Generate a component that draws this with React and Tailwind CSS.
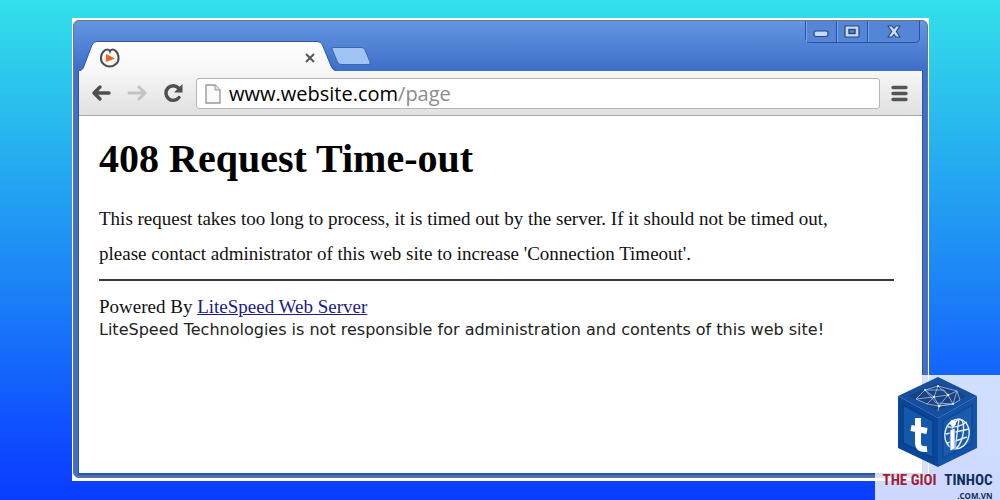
import React, { useState } from 'react';

const WindowButton = ({ label, className, children }) => (
  <button
    type="button"
    aria-label={label}
    className={`flex h-full items-center justify-center shadow-[inset_1px_0_0_#79a6ea] ${className}`}
  >
    {children}
  </button>
);

const WindowControls = () => (
  <div className="mr-0.5 flex h-[22px] shrink-0 rounded-b-[5px] border-x border-b border-[#2a519f] bg-[#5485d6]">
    <WindowButton label="Minimize" className="w-[31px] border-r border-[#2a519f]">
      <svg width="16" height="8" viewBox="0 0 16 8" className="mt-1">
        <rect x="1" y="1" width="14" height="5.500" rx="2" fill="#c9daf6" stroke="#28457f" strokeWidth="1.2" />
      </svg>
    </WindowButton>
    <WindowButton label="Maximize" className="w-[31px] border-r border-[#2a519f]">
      <svg width="16" height="13" viewBox="0 0 16 13">
        <rect x="1" y="1" width="14" height="11" rx="1" fill="#c9daf6" stroke="#28457f" strokeWidth="1.2" />
        <rect x="5" y="4.5" width="6" height="4" fill="#5485d6" stroke="#28457f" strokeWidth="1.4" />
      </svg>
    </WindowButton>
    <WindowButton label="Close" className="w-[51px]">
      <svg width="14" height="13" viewBox="0 0 14 13">
        <path d="M1 1h4l2 2.5L9 1h4L9.3 6.5 13 12H9L7 9.5 5 12H1l3.7-5.5z" fill="#c9daf6" stroke="#28457f" strokeWidth="1.1" strokeLinejoin="round" />
      </svg>
    </WindowButton>
  </div>
);

const TabStrip = () => (
  <div className="flex h-[50px] items-start justify-between">
    <div className="flex items-start pt-5">
      <div className="relative h-[30px] w-[258px]">
        <svg width="258" height="30" viewBox="0 0 258 30" className="absolute inset-0">
          <defs>
            <linearGradient id="tab" x1="0" y1="0" x2="0" y2="1">
              <stop offset="0" stopColor="#ffffff" />
              <stop offset="1" stopColor="#f7f7f7" />
            </linearGradient>
          </defs>
          <path d="M0 30C3 29 4 28 5 25L13 4Q14.500 .5 18 .5H238Q242 .5 243.500 4L252 25Q254 30 258 30Z" fill="url(#tab)" />
          <path d="M0 30C3 29 4 28 5 25L13 4Q14.500 .5 18 .5H238Q242 .5 243.500 4L252 25Q254 30 258 30" fill="none" stroke="#31569f" />
        </svg>
        <div className="relative flex h-full items-center justify-between pt-1 pr-[18px] pl-5">
          <svg width="22" height="22" viewBox="0 0 22 22">
            <path d="M11 4.300C10 1.800 7 2 5.300 3.800 .8 7.500 1 14 4.500 17 8 20.300 13.500 20.300 17 17 20.500 14 20.500 7.500 16.500 3.800 14.800 2 12 1.800 11 4.300Z" fill="#f7f7f7" stroke="#4d4d4d" strokeWidth="2" />
            <path d="M7 7V15L16 11.500Z" fill="#f4601d" />
          </svg>
          <button type="button" aria-label="Close tab" className="p-1">
            <svg width="10" height="10" viewBox="0 0 10 10">
              <path d="M1 1l8 8M9 1L1 9" stroke="#555" strokeWidth="2" />
            </svg>
          </button>
        </div>
      </div>
      <button type="button" aria-label="New tab" className="-ml-2 pt-1">
        <svg width="42" height="20" viewBox="0 0 42 20">
          <path d="M4 2.500H33Q35 2.500 36 5L41 17Q41.500 19.500 40 19.500H12Q9.500 19.500 8.500 17L3 4Q2.500 2.500 4 2.500Z" fill="#9fc4f3" stroke="#3c66b5" />
        </svg>
      </button>
    </div>
    <WindowControls />
  </div>
);

const Toolbar = () => {
  const [host, setHost] = useState('www.website.com');

  return (
    <div className="flex h-[45px] items-center border-b border-[#a9a9a9] bg-linear-to-b from-[#f7f7f7] to-[#e0e0e0] pr-3.5 pl-3">
      <button type="button" aria-label="Back">
        <svg width="20" height="18" viewBox="0 0 20 18">
          <path d="M9 3 3 9 9 15M3 9H18" fill="none" stroke="#4f4f4f" strokeWidth="3.400" strokeLinecap="round" strokeLinejoin="round" />
        </svg>
      </button>
      <button type="button" aria-label="Forward" className="ml-4">
        <svg width="20" height="18" viewBox="0 0 20 18">
          <path d="M12 3 18 9 12 15M18 9H2" fill="none" stroke="#c3c3c3" strokeWidth="3" strokeLinecap="round" strokeLinejoin="round" />
        </svg>
      </button>
      <button type="button" aria-label="Reload" className="ml-4">
        <svg width="20" height="20" viewBox="0 0 20 20">
          <path d="M15.500 5A7.300 7.300 0 1 0 16 14.500" fill="none" stroke="#4f4f4f" strokeWidth="3.400" strokeLinecap="round" />
          <path d="M19.500 1V9.500H11Z" fill="#4f4f4f" />
        </svg>
      </button>
      <label className="ml-[13px] flex h-[31px] min-w-0 flex-1 items-center rounded-[3px] border border-[#b5b5b5] bg-white pt-px pl-2 font-['Open_Sans',sans-serif] text-[20px] leading-[28px]">
        <svg width="16" height="20" viewBox="0 0 16 20" className="mr-2 shrink-0">
          <path d="M1 1H10L15 6V19H1Z" fill="#fafafa" stroke="#9a9a9a" strokeWidth="1.400" />
          <path d="M10 1V6H15" fill="#e4e4e4" stroke="#9a9a9a" />
        </svg>
        <input
          type="text"
          aria-label="Address"
          value={host}
          onChange={(e) => setHost(e.target.value)}
          className="field-sizing-content min-w-0 bg-transparent text-black outline-none"
        />
        <span className="text-[#8c8c8c]">/page</span>
      </label>
      <button type="button" aria-label="Menu" className="ml-[11px]">
        <svg width="17" height="17" viewBox="0 0 17 17">
          <path d="M2 2.500H15M2 8.500H15M2 14.500H15" stroke="#555" strokeWidth="3.400" strokeLinecap="round" />
        </svg>
      </button>
    </div>
  );
};

const ErrorPage = () => (
  <main className="flex-1 bg-white pt-[21px] pr-7 pl-5 font-['Liberation_Serif',serif] text-[19px] text-[#111]">
    <h1 className="text-[40px] leading-[44px] font-bold text-black">408 Request Time-out</h1>
    <p className="mt-5 leading-[35px]">
      This request takes too long to process, it is timed out by the server. If it should not be timed out,
      <br />
      please contact administrator of this web site to increase 'Connection Timeout'.
    </p>
    <hr className="mt-2 border-t-2 border-[#3a3a3a]" />
    <p className="mt-3 leading-[28px]">
      Powered By <a href="#litespeed" className="text-[#1a1a8c] underline">LiteSpeed Web Server</a>
    </p>
    <p className="font-['DejaVu_Sans',sans-serif] text-[16px] leading-[18px] text-[#222]">
      LiteSpeed Technologies is not responsible for administration and contents of this web site!
    </p>
  </main>
);

const Watermark = () => (
  <div className="absolute right-0 bottom-0 flex h-[125px] w-[125px] flex-col items-center bg-white/80">
    <svg width="84" height="92" viewBox="0 0 84 92" className="mt-0.5 shrink-0">
      <path d="M42 0 81 19 42 41 2 19Z" fill="#164f9f" />
      <path d="M2 19 42 41V90L2 71Z" fill="#0b4597" />
      <path d="M81 19 42 41V90L81 71Z" fill="#1553a8" />
      <path d="M42 6 70 19 42 34 12 19Z" fill="#194382" />
      <path d="M7 28 37 44V81L7 66Z" fill="#1358aa" stroke="#0a3f88" strokeWidth="1.500" />
      <path d="M76 28 47 44V81L76 66Z" fill="#195cae" stroke="#0e4a98" strokeWidth="1.500" />
      <g fill="none" stroke="#b7cfee" strokeWidth=".7">
        <path d="M20 22 29 13 38 20 42 9 52 18 61 14 57 27 43 29 31 27 20 22 38 20 52 18 57 27 40 26 29 13 42 9 61 14 64 23 57 27M31 27 38 20 43 29 52 18M42 34 43 29 57 27M29 13 48 13 52 18" />
      </g>
      <g fill="#e1edfc">
        <circle cx="29" cy="13" r="1" />
        <circle cx="38" cy="20" r="1.300" />
        <circle cx="52" cy="18" r="1.300" />
        <circle cx="43" cy="29" r="1.300" />
        <circle cx="57" cy="27" r="1" />
        <circle cx="42" cy="9" r="1" />
      </g>
      {/* left face mark */}
      <path d="M22 41V66Q22 73 31 72M15 51 31 54" fill="none" stroke="#fff" strokeWidth="6" />
      {/* globe on the right face */}
      <g fill="none" stroke="#e6effb" strokeWidth="1.400">
        <ellipse cx="61" cy="57" rx="12" ry="15" transform="rotate(12 61 57)" />
        <ellipse cx="61" cy="57" rx="6" ry="15" transform="rotate(12 61 57)" />
        <path d="M63 42 59 72M50 57 73 52M52 50Q62 51 71 45M51 66Q61 64 71 60" />
      </g>
      <path d="M54 53 59 51V72L54 74Z" fill="#fff" stroke="#1553a8" strokeWidth=".7" />
      <circle cx="57" cy="46" r="3" fill="#fff" />
    </svg>
    <div className="w-[110px] font-['Roboto_Condensed','Roboto',sans-serif]">
      <p className="flex justify-between text-[15px] leading-[23px] font-bold whitespace-nowrap">
        <span className="text-[#a51c3b]">THE GIOI</span>
        <span className="text-[#102d61]">TINHOC</span>
      </p>
      <p className="text-right font-['Open_Sans',sans-serif] text-[8px] leading-[8px] font-bold text-[#102d61]">.COM.VN</p>
    </div>
  </div>
);

const App = () => (
  <div className="relative flex min-h-screen flex-col bg-[linear-gradient(#33e0ea,#27b3ef_28%,#1a7af8_62%,#0e4cff_88%,#0a3cff)] pt-[18px] pr-[71px] pb-[19px] pl-[72px]">
    <div className="flex flex-1 flex-col bg-white px-px pt-0.5 pb-[3px]">
      <div className="flex flex-1 flex-col rounded-md border border-[#6d7480] bg-[#3f6fc9] bg-linear-to-b from-[#6496e1] from-0% to-[#3f6fc9] to-[48px] px-[5px] pb-1">
        <TabStrip />
        <div className="flex flex-1 flex-col shadow-[0_1px_0_1px_#2f55a0]">
          <Toolbar />
          <ErrorPage />
        </div>
      </div>
    </div>
    <Watermark />
  </div>
);

export default App;
